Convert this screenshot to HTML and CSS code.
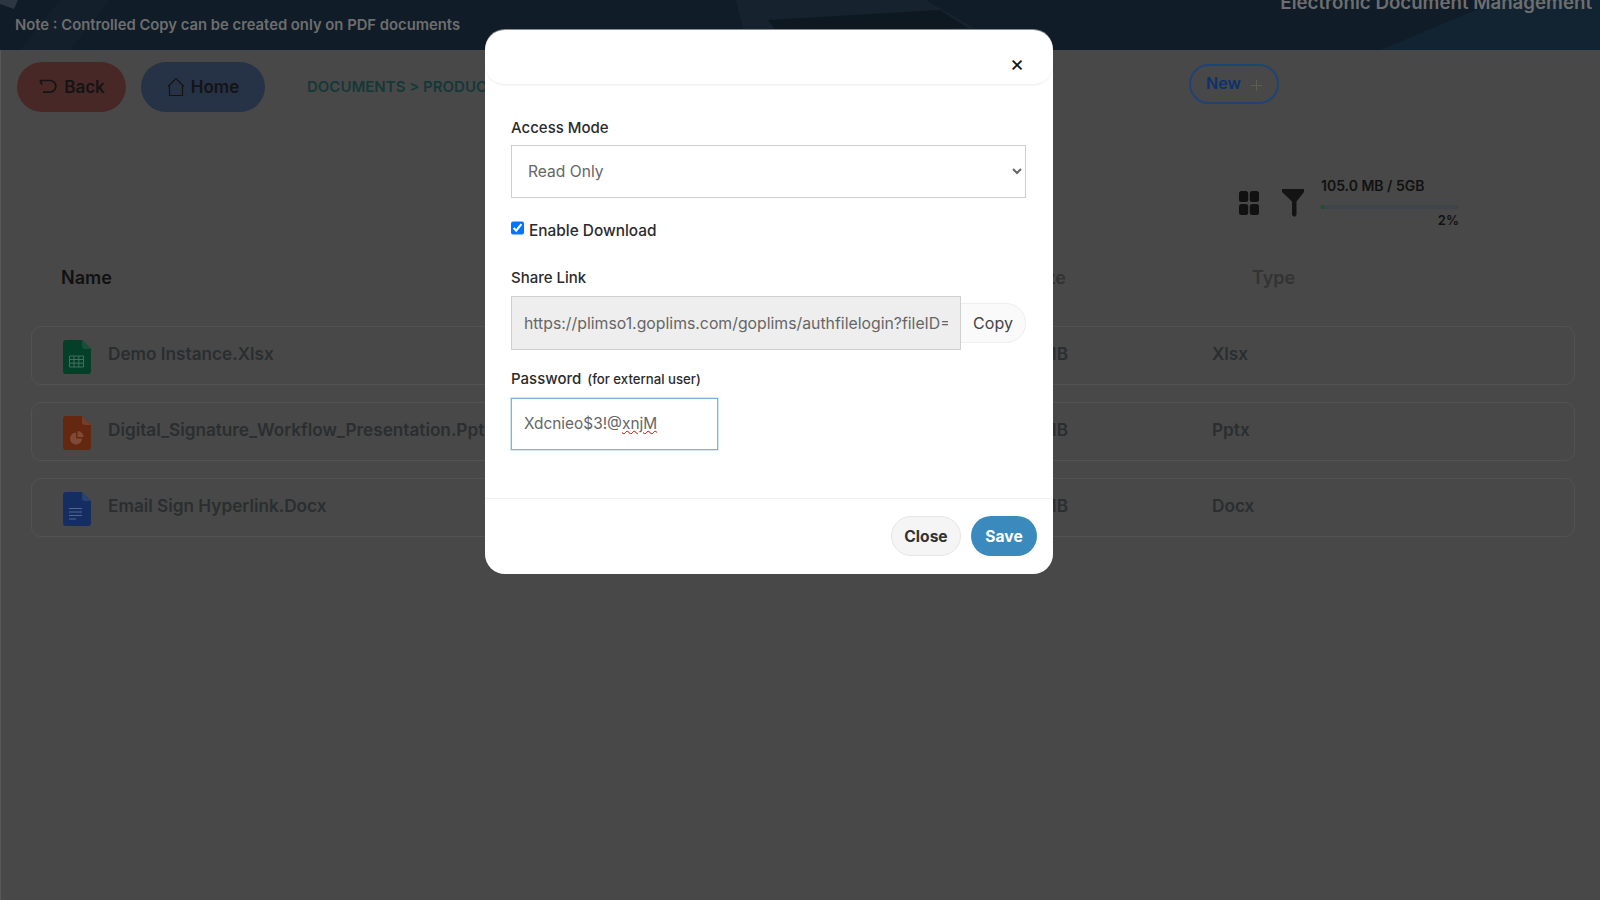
FILE: index.html
```html
<!DOCTYPE html>
<html lang="en">

<head>
  <meta charset="UTF-8" />
  <title>Documents</title>
  <link rel="stylesheet" href="styles.css">
</head>

<body>

  <header class="topbar">
    <!-- faint banner picture -->
    <svg class="banner-art" width="1600" height="50" viewBox="0 0 1600 50">
      <path fill="#2c3640" d="M0 0h18l-4 9L0 4z" />
      <path fill="#131f2b" d="M60 0h50L70 50H20z" />
      <path fill="#16222d" d="M736 0h190l72 42-250 8z" />
      <path fill="#0e1821" d="M768 20l172-10 28 18-190 6z" />
      <path fill="#122431" d="M1380 50l120-50h100v50z" />
    </svg>
    <p class="note">Note : Controlled Copy can be created only on PDF documents</p>
    <p class="app-title">Electronic Document Management</p>
  </header>

  <div class="toolbar">
    <button class="pill pill-back">
      <svg width="20" height="18" viewBox="0 0 20 18" fill="none" stroke="#141414" stroke-width="1.7">
        <path d="M2 2.500l2 4.200M2 2.500h10a5.800 5.800 0 0 1 0 11.600H5" />
      </svg>
      Back
    </button>
    <button class="pill pill-home">
      <svg width="18" height="20" viewBox="0 0 18 20" fill="none" stroke="#141414" stroke-width="1.2">
        <path d="M1 9.500L9 1.500l8 8M2.500 9v9.500h3.500M15.500 9v9.500H12M5 18.500h8" />
      </svg>
      Home
    </button>
    <nav class="crumbs">DOCUMENTS &gt; PRODUCTION</nav>
    <button class="new-btn">
      New
      <svg class="plus" width="11" height="11" viewBox="0 0 11 11" fill="none" stroke="#5c5e4c" stroke-width="1.200">
        <path d="M5.500 0v11M0 5.500h11" />
      </svg>
    </button>
  </div>

  <div class="tools">
    <svg class="grid-icon" width="20" height="24" viewBox="0 0 20 24" fill="#111">
      <rect x="0" y="0" width="9.200" height="11" rx="2.500" />
      <rect x="10.800" y="0" width="9.200" height="11" rx="2.500" />
      <rect x="0" y="13" width="9.200" height="11" rx="2.500" />
      <rect x="10.800" y="13" width="9.200" height="11" rx="2.500" />
    </svg>
    <svg class="funnel-icon" width="22" height="28" viewBox="0 0 22 28" fill="#141414">
      <path d="M0 0h22v3l-7.500 9.500V26l-2 2-2.500-2V12.500L0 3z" />
    </svg>
    <div class="storage">
      <div class="storage-text">105.0 MB / 5GB</div>
      <div class="bar"><div class="bar-fill" style="width: 2%"></div></div>
      <div class="storage-pct">2%</div>
    </div>
  </div>

  <div class="file-head">
    <span class="col-name">Name</span>
    <span class="col-size">Size</span>
    <span class="col-type">Type</span>
  </div>

  <div class="file-list">
    <div class="file-row">
      <svg class="file-icon" width="28" height="34" viewBox="0 0 28 34">
        <path fill="#043f29" d="M3 0h16l9 9v22a3 3 0 0 1-3 3H3a3 3 0 0 1-3-3V3a3 3 0 0 1 3-3z" />
        <path fill="#17503a" d="M19 0l9 9h-6a3 3 0 0 1-3-3z" />
        <path fill="none" stroke="#41705e" stroke-width="1" d="M6.500 16h14v11h-14zM6.500 19.500h14M6.500 23.200h14M11 16v11M15.800 16v11" />
      </svg>
      <span class="file-name">Demo Instance.Xlsx</span>
      <span class="file-size">1.1 MB</span>
      <span class="file-type">Xlsx</span>
    </div>
    <div class="file-row">
      <svg class="file-icon" width="28" height="34" viewBox="0 0 28 34">
        <path fill="#642811" d="M3 0h16l9 9v22a3 3 0 0 1-3 3H3a3 3 0 0 1-3-3V3a3 3 0 0 1 3-3z" />
        <path fill="#753d2a" d="M19 0l9 9h-6a3 3 0 0 1-3-3z" />
        <path fill="#804a37" d="M13 16.500v6h6a6 6 0 1 1-6-6z" />
        <path fill="#804a37" d="M14.500 15a6 6 0 0 1 6 6h-6z" />
      </svg>
      <span class="file-name">Digital_Signature_Workflow_Presentation.Pptx</span>
      <span class="file-size">2.4 MB</span>
      <span class="file-type">Pptx</span>
    </div>
    <div class="file-row">
      <svg class="file-icon" width="28" height="34" viewBox="0 0 28 34">
        <path fill="#142e62" d="M3 0h16l9 9v22a3 3 0 0 1-3 3H3a3 3 0 0 1-3-3V3a3 3 0 0 1 3-3z" />
        <path fill="#2a4272" d="M19 0l9 9h-6a3 3 0 0 1-3-3z" />
        <path fill="none" stroke="#53678c" stroke-width="1.200" d="M6 16.500h13M6 20h13M6 23.500h13M6 27h7" />
      </svg>
      <span class="file-name">Email Sign Hyperlink.Docx</span>
      <span class="file-size">1.5 MB</span>
      <span class="file-type">Docx</span>
    </div>
  </div>

  <!-- share dialog -->
  <div class="modal">
    <div class="modal-head">
      <button class="modal-x">&times;</button>
    </div>

    <div class="modal-body">
      <label class="lbl">Access Mode</label>
      <select class="field select-field">
        <option>Read Only</option>
        <option>Edit</option>
      </select>

      <label class="check-line">
        <input type="checkbox" checked>
        <span>Enable Download</span>
      </label>

      <label class="lbl lbl-link">Share Link</label>
      <div class="link-group">
        <input class="field link-field" type="text" readonly
          value="https://plimso1.goplims.com/goplims/authfilelogin?fileID=84213&amp;mode=read">
        <button class="copy-btn">Copy</button>
      </div>

      <label class="lbl lbl-pass">Password <small>(for external user)</small></label>
      <div class="field pass-field"><span>Xdcnieo$3!@</span><span class="typo">xnjM</span></div>
    </div>

    <div class="modal-foot">
      <button class="foot-btn btn-close">Close</button>
      <button class="foot-btn btn-save">Save</button>
    </div>
  </div>

</body>

</html>
```

FILE: styles.css
```css
* {
  box-sizing: border-box;
}

html,
body {
  height: 100%;
}

body {
  margin: 0;
  background-color: #484848;
  box-shadow: inset 1px 0 #585858;
  font-family: Inter, "Noto Sans", sans-serif;
  color: #111;
  overflow: hidden;
}

button {
  font-family: inherit;
  cursor: pointer;
}

/* top bar */
.topbar {
  position: relative;
  height: 50px;
  padding: 0 8px 0 15px;
  display: flex;
  justify-content: space-between;
  background-color: #101c28;
  overflow: hidden;
}

.banner-art {
  position: absolute;
  top: 0;
  left: 0;
}

.note,
.app-title {
  position: relative;
  font-weight: 600;
  color: #6e6e6e;
}

.note {
  margin: 16px 0 0;
  font-size: 14.8px;
}

.app-title {
  margin: -9px 0 0;
  font-size: 18.7px;
}

/* back / home row */
.toolbar {
  height: 74px;
  padding: 12px 321px 0 17px;
  display: flex;
  align-items: flex-start;
}

.pill {
  height: 50px;
  border: 0;
  border-radius: 25px;
  display: flex;
  align-items: center;
  justify-content: center;
  gap: 6px;
  font-size: 17px;
  font-weight: 600;
  color: #141414;
}

.pill-back {
  width: 109px;
  background-color: #482827;
}

.pill-home {
  width: 124px;
  margin-left: 15px;
  background-color: #263246;
}

.crumbs {
  margin: 15px 0 0 42px;
  font-size: 15px;
  line-height: 20px;
  font-weight: 600;
  color: #143838;
  white-space: nowrap;
}

.new-btn {
  width: 90px;
  height: 40px;
  margin: 2px 0 0 auto;
  padding: 0 0 2px 0;
  background: none;
  border: 2px solid #1d4474;
  border-radius: 20px;
  font-size: 16px;
  font-weight: 600;
  color: #0b326e;
  white-space: nowrap;
}

.plus {
  margin: 0 0 -2px 6px;
}

/* grid, filter, storage */
.tools {
  height: 79px;
  padding: 0 141px 0 0;
  display: flex;
  justify-content: flex-end;
  align-items: flex-start;
}

.grid-icon {
  margin-top: 67px;
}

.funnel-icon {
  margin: 65px 0 0 23px;
}

.storage {
  width: 138px;
  margin: 52px 0 0 17px;
  font-weight: 600;
}

.storage-text {
  font-size: 14px;
  line-height: 20px;
}

.bar {
  height: 4px;
  margin-top: 9px;
  background-color: #3f444a;
  border-radius: 2px;
}

.bar-fill {
  height: 100%;
  background-color: #14561f;
  border-radius: 2px;
}

.storage-pct {
  margin-top: 2px;
  font-size: 13px;
  line-height: 18px;
  text-align: right;
}

/* file table */
.file-head,
.file-row {
  display: grid;
  align-items: center;
}

.file-head {
  height: 50px;
  margin-top: 49px;
  padding-left: 61px;
  grid-template-columns: 1fr 130px 534px;
  font-size: 18px;
  font-weight: 600;
}

.col-size {
  color: #333;
  text-align: right;
}

.col-type {
  color: #333;
  padding-left: 186px;
}

.file-list {
  margin: 24px 25px 0 31px;
  display: flex;
  flex-direction: column;
  gap: 17px;
}

.file-row {
  position: relative;
  height: 59px;
  padding-left: 76px;
  grid-template-columns: 1fr 130px 506px;
  border: 1px solid #525252;
  border-radius: 10px;
  font-size: 17.2px;
  font-weight: 600;
  color: #2a2e30;
}

.file-icon {
  position: absolute;
  left: 31px;
  top: 13px;
}

.file-name {
  margin-top: -4px;
  white-space: nowrap;
}

.file-size {
  margin-top: -4px;
  text-align: right;
}

.file-type {
  margin-top: -4px;
  padding-left: 144px;
}

/* share dialog */
.modal {
  position: absolute;
  top: 30px;
  left: 485px;
  width: 568px;
  height: 544px;
  display: flex;
  flex-direction: column;
  background-color: #fff;
  border-radius: 20px;
  box-shadow: 0 -1px 0 #8c8c8c;
}

.modal-head {
  height: 55px;
  padding: 21px 26px 0 0;
  text-align: right;
  border-bottom: 1px solid #f1f1f1;
  border-radius: 0 0 20px 20px;
  box-shadow: 0 1px 2px rgba(0, 0, 0, 0.04);
}

.modal-x {
  width: 20px;
  height: 24px;
  padding: 0;
  background: none;
  border: 0;
  font-size: 22px;
  line-height: 24px;
  color: #111;
}

.modal-body {
  flex: 1;
  padding: 32px 27px 0 26px;
}

.lbl {
  display: block;
  font-size: 15px;
  line-height: 22px;
  font-weight: 500;
  color: #2b2b2b;
}

.field {
  display: block;
  height: 53px;
  background-color: #fff;
  border: 1px solid #cfcfcf;
  font-family: inherit;
  font-size: 15.6px;
  color: #666;
}

.select-field {
  width: 100%;
  margin-top: 6px;
  padding-left: 12px;
}

.check-line {
  margin-top: 22px;
  display: flex;
  align-items: flex-start;
  font-size: 15.4px;
  line-height: 22px;
  font-weight: 500;
  color: #2b2b2b;
}

.check-line input {
  width: 13px;
  height: 14px;
  margin: 1px 5px 0 0;
}

.lbl-link {
  margin-top: 25px;
}

.link-group {
  margin-top: 7px;
  display: flex;
  align-items: center;
}

.link-field {
  width: 450px;
  height: 54px;
  padding: 0 12px;
  background-color: #eee;
  font-size: 15.8px;
  outline: 0;
}

.copy-btn {
  width: 65px;
  height: 40px;
  padding: 0;
  background-color: #fafafa;
  border: 1px solid #eee;
  border-left: 0;
  border-radius: 0 20px 20px 0;
  font-size: 16px;
  color: #444;
}

.lbl-pass {
  margin-top: 18px;
}

.lbl-pass small {
  margin-left: 2px;
  font-size: 13.2px;
}

.pass-field {
  width: 207px;
  height: 52px;
  margin-top: 8px;
  padding: 0 12px 2px;
  display: flex;
  align-items: center;
  font-size: 15.4px;
  border-color: #7fb4d8;
  box-shadow: 0 0 0 1px rgba(134, 183, 216, 0.35);
}

.typo {
  text-decoration: underline wavy #e00000 1px;
}

.modal-foot {
  height: 76px;
  padding: 17px 16px 0 0;
  display: flex;
  justify-content: flex-end;
  gap: 10px;
  border-top: 1px solid #f1f1f1;
}

.foot-btn {
  height: 40px;
  padding: 0;
  border-radius: 20px;
  font-size: 15.6px;
  font-weight: 700;
}

.btn-close {
  width: 70px;
  background-color: #f5f5f5;
  border: 1px solid #e6e6e6;
  color: #333;
}

.btn-save {
  width: 66px;
  background-color: #3a8abd;
  border: 0;
  color: #fff;
}
```
